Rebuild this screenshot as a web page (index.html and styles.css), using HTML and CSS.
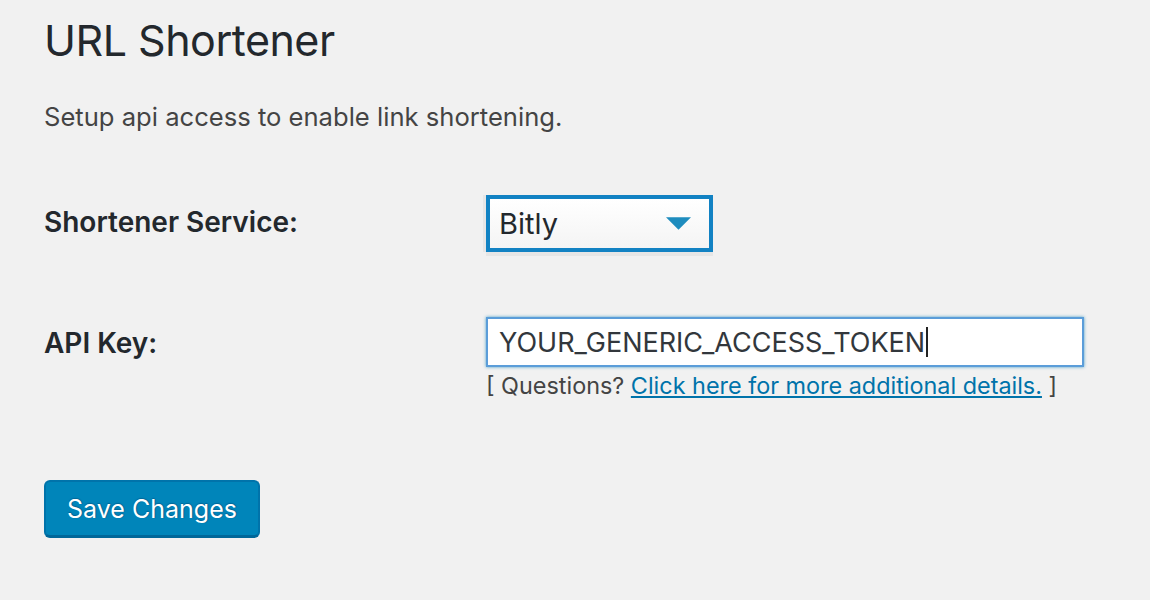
FILE: index.html
```html
<!DOCTYPE html>
<html lang="en">
<head>
	<meta charset="utf-8">
	<title>URL Shortener</title>
	<link rel="stylesheet" href="styles.css">
</head>
<body>
	<div class="wrap">
		<h1>URL Shortener</h1>
		<p class="intro">Setup api access to enable link shortening.</p>

		<div class="form-table">
			<div class="row">
				<label class="label" for="service">Shortener Service:</label>
				<div class="field">
					<div class="select">
						<span>Bitly</span>
						<svg class="arrow" width="26" height="14" viewBox="0 0 26 14"><path d="M0 0 H26 L13 13 Z" fill="#1e8cbe"/></svg>
					</div>
				</div>
			</div>

			<div class="row row-key">
				<label class="label" for="apikey">API Key:</label>
				<div class="field">
					<div class="input"><span>YOUR_GENERIC_ACCESS_TOKEN</span><span class="caret"></span></div>
					<p class="help">[ Questions? <a href="#">Click here for more additional details.</a> ]</p>
				</div>
			</div>
		</div>

		<button class="button">Save Changes</button>
	</div>
</body>
</html>
```

FILE: styles.css
```css
* {
	box-sizing: border-box;
}

body {
	margin: 0;
	background: #f1f1f1;
	color: #23282d;
	font-family: Inter, "Noto Sans", sans-serif;
}

.wrap {
	padding: 14px 0 0 44px;
}

h1 {
	margin: 0;
	font-size: 43px;
	font-weight: 400;
	line-height: 52px;
	letter-spacing: -0.5px;
}

.intro {
	margin: 35px 0 0;
	font-size: 25.6px;
	color: #444;
}

/* rows of the settings form */
.form-table {
	margin-top: 63px;
}

.row {
	display: grid;
	grid-template-columns: 442px 1fr;
	align-items: start;
}

.row-key {
	margin-top: 65px;
}

.label {
	font-size: 28px;
	font-weight: 600;
	padding-top: 10px;
}

.row-key .label {
	padding-top: 9px;
}

.select {
	width: 227px;
	height: 57px;
	border: 4px solid #1282c3;
	background: linear-gradient(#fff, #f4f4f4);
	box-shadow: 0 4px 0 #e6e6e6, -3px 0 0 #e6e6e6;
	display: flex;
	align-items: center;
	justify-content: space-between;
	padding: 0 18px 0 9px;
	font-size: 29px;
}

.arrow {
	width: 25px;
	height: 14px;
}

.input {
	width: 598px;
	height: 50px;
	background: #fff;
	border: 2px solid #5b9dd9;
	box-shadow: 0 0 3px rgba(30, 140, 190, 0.8);
	display: flex;
	align-items: center;
	padding-left: 11px;
	font-size: 27px;
	color: #32373c;
}

.caret {
	display: inline-block;
	width: 2px;
	height: 30px;
	background: #222;
	margin-left: 1px;
}

.help {
	margin: 4px 0 0;
	font-size: 23.4px;
	color: #444;
}

.help a {
	color: #0073aa;
}

.button {
	margin-top: 80px;
	width: 216px;
	height: 58px;
	background: #0085ba;
	border: 2px solid #0073aa;
	border-bottom-width: 3px;
	border-bottom-color: #006799;
	border-radius: 6px;
	color: #fff;
	font-family: inherit;
	font-size: 25px;
	text-shadow: 0 -1px 1px #006799, 1px 0 1px #006799;
}
```
